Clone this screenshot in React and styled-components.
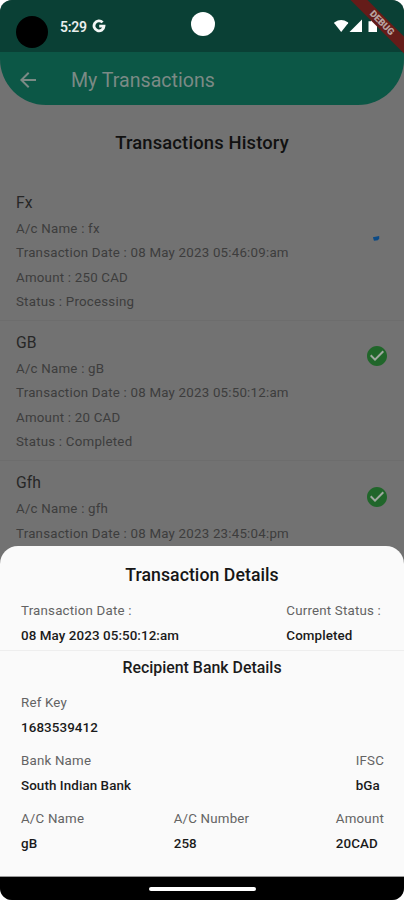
import React from "react";
import styled, { createGlobalStyle } from "styled-components";
import { MdArrowBack, MdCheckCircle } from "react-icons/md";

const transactions = [
  {
    title: "Fx",
    name: "fx",
    date: "08 May 2023 05:46:09:am",
    amount: "250 CAD",
    status: "Processing",
  },
  {
    title: "GB",
    name: "gB",
    date: "08 May 2023 05:50:12:am",
    amount: "20 CAD",
    status: "Completed",
  },
  {
    title: "Gfh",
    name: "gfh",
    date: "08 May 2023 23:45:04:pm",
    status: "Completed",
  },
];

const App = () => {
  return (
    <>
      <GlobalStyle />
      <Phone>
        <StatusBar>
          <Bubble />
          <Clock>5:29</Clock>
          <GoogleIcon />
          <Camera />
          <SignalIcons />
        </StatusBar>
        <Header>
          <MdArrowBack size={24} />
          <HeaderTitle>My Transactions</HeaderTitle>
        </Header>
        <History>
          <HistoryTitle>Transactions History</HistoryTitle>
          {transactions.map((item) => (
            <TransactionItem key={item.title} {...item} />
          ))}
        </History>
        <DetailSheet />
        <NavBar>
          <NavHandle />
        </NavBar>
        <DebugBanner>DEBUG</DebugBanner>
      </Phone>
    </>
  );
};

const TransactionItem = ({ title, name, date, amount, status }) => {
  return (
    <Item>
      <div>
        <ItemTitle>{title}</ItemTitle>
        <ItemLine>A/c Name : {name}</ItemLine>
        <ItemLine>Transaction Date : {date}</ItemLine>
        {amount && (
          <>
            <ItemLine>Amount : {amount}</ItemLine>
            <ItemLine>Status : {status}</ItemLine>
          </>
        )}
      </div>
      <ItemIcon>
        {status === "Completed" ? <CheckIcon /> : <SpinnerIcon />}
      </ItemIcon>
    </Item>
  );
};

const DetailSheet = () => {
  return (
    <Sheet>
      <SheetTitle>Transaction Details</SheetTitle>
      <SheetRow>
        <Detail label="Transaction Date :" value="08 May 2023 05:50:12:am" />
        <Detail label="Current Status :" value="Completed" inset={3} />
      </SheetRow>
      <Divider />
      <SheetSubtitle>Recipient Bank Details</SheetSubtitle>
      <SheetRow>
        <Detail label="Ref Key" value="1683539412" />
      </SheetRow>
      <SheetRow>
        <Detail label="Bank Name" value="South Indian Bank" />
        <Detail label="IFSC" value="bGa" />
      </SheetRow>
      <SheetRow>
        <Detail label="A/C Name" value="gB" />
        <Detail label="A/C Number" value="258" inset={-3} />
        <Detail label="Amount" value="20CAD" />
      </SheetRow>
    </Sheet>
  );
};

const Detail = ({ label, value, inset = 0 }) => (
  <DetailCell $inset={inset}>
    <DetailLabel>{label}</DetailLabel>
    <DetailValue>{value}</DetailValue>
  </DetailCell>
);

const GoogleIcon = () => (
  <svg width="14" height="14" viewBox="0 0 14 14" fill="none">
    <path
      d="M10.6 3.4A5 5 0 1 0 12 7.2H7.2"
      stroke="#f4f7f6"
      strokeWidth="2.8"
    />
  </svg>
);

// wifi, mobile signal and battery
const SignalIcons = () => (
  <SignalSvg width="46" height="14" viewBox="0 0 46 14" fill="#ffffff">
    <path d="M7.2 13 L0.3 4.2 Q0 3.7 0.6 3.2 Q7.2 -1.4 13.8 3.2 Q14.4 3.7 14.1 4.2 Z" />
    <path d="M28 0.4 V13 H15.5 Z" />
    <path d="M34.5 2.2 H37 V0.6 H41 V2.2 H43 V13 H34.5 Z" />
  </SignalSvg>
);

const SpinnerIcon = () => (
  <svg width="24" height="42" viewBox="0 0 24 42">
    <path d="M7.9 33.2 L14.2 32 V34.8 L12.8 36.2 L9 36.8 Z" fill="#0b4a86" />
  </svg>
);

export default App;

const GlobalStyle = createGlobalStyle`
  * {
    box-sizing: border-box;
  }
  body {
    margin: 0;
    background: #ffffff;
    font-family: Roboto, "Liberation Sans", sans-serif;
  }
`;

const Phone = styled.div`
  position: relative;
  display: flex;
  flex-direction: column;
  width: 404px;
  height: 900px;
  overflow: hidden;
  background: #727272;
  border-radius: 12px;
`;

const StatusBar = styled.div`
  position: relative;
  display: flex;
  flex: none;
  align-items: center;
  height: 52px;
  padding: 0 24px 0 16px;
  background: #0a4035;
`;

const Bubble = styled.div`
  width: 32px;
  height: 32px;
  margin-top: 11px;
  background: #000000;
  border-radius: 50%;
`;

const Clock = styled.div`
  width: 27px;
  margin: 1px 5px 0 12px;
  color: #e8eeec;
  font-size: 14px;
  font-weight: 600;
  letter-spacing: -0.3px;
`;

const Camera = styled.div`
  position: absolute;
  top: 12px;
  left: 191px;
  width: 24px;
  height: 24px;
  background: #ffffff;
  border-radius: 50%;
`;

const SignalSvg = styled.svg`
  margin-left: auto;
`;

const Header = styled.div`
  display: flex;
  flex: none;
  align-items: center;
  height: 53px;
  padding: 2px 16px 0;
  color: #7b8a85;
  background: #0c5746;
  border-radius: 0 0 46px 46px;
`;

const HeaderTitle = styled.div`
  margin: 1px 0 0 31px;
  font-size: 19.6px;
`;

const History = styled.div`
  flex: none;
  height: 441px;
  overflow: hidden;
`;

const HistoryTitle = styled.div`
  height: 75.6px;
  padding-top: 26px;
  color: #111111;
  font-size: 18.4px;
  font-weight: 500;
  line-height: 24px;
  letter-spacing: 0.15px;
  text-align: center;
`;

const Item = styled.div`
  display: flex;
  justify-content: space-between;
  height: 140.3px;
  padding: 12px 15px 0 16px;
  border-bottom: 1px solid #6d6d6d;
`;

const ItemTitle = styled.div`
  margin-bottom: 4px;
  color: #272727;
  font-size: 15.7px;
  line-height: 20px;
`;

const ItemLine = styled.div`
  color: #3d3d3d;
  font-size: 13.3px;
  line-height: 24.5px;
  letter-spacing: 0.22px;
`;

const ItemIcon = styled.div`
  padding-top: 11.5px;
`;

const CheckIcon = styled(MdCheckCircle)`
  width: 24px;
  height: 24px;
  color: #20662a;
  background: radial-gradient(#a0a8a0 8px, transparent 8.5px);
`;

const Sheet = styled.div`
  position: relative;
  display: flex;
  flex: 1;
  flex-direction: column;
  padding-top: 17px;
  background: #fafafa;
  border-bottom: 1px solid #9a9a9a;
  border-radius: 18px 18px 0 0;
`;

const SheetTitle = styled.div`
  margin-bottom: 12px;
  color: #161616;
  font-size: 17.7px;
  font-weight: 500;
  line-height: 24px;
  letter-spacing: 0.05px;
  text-align: center;
`;

const SheetRow = styled.div`
  display: flex;
  justify-content: space-between;
  height: 58px;
  padding: 0 20px 0 21px;
`;

const DetailCell = styled.div`
  margin-right: ${(props) => props.$inset}px;
`;

const DetailLabel = styled.div`
  color: #636363;
  font-size: 13.3px;
  line-height: 24.5px;
  letter-spacing: 0.2px;
`;

const DetailValue = styled.div`
  color: #1a1a1a;
  font-size: 13.4px;
  font-weight: 500;
  line-height: 24.5px;
  letter-spacing: 0.08px;
`;

const Divider = styled.div`
  height: 1px;
  margin-top: -7px;
  background: #eeeeee;
`;

const SheetSubtitle = styled.div`
  margin: 5px 0 11px;
  color: #1c1c1c;
  font-size: 15.9px;
  font-weight: 500;
  line-height: 24px;
  text-align: center;
`;

const NavBar = styled.div`
  display: flex;
  flex: none;
  align-items: center;
  justify-content: center;
  height: 23px;
  background: #000000;
`;

const NavHandle = styled.div`
  width: 107px;
  height: 4px;
  background: #ffffff;
  border-radius: 2px;
`;

const DebugBanner = styled.div`
  position: absolute;
  top: 17px;
  right: -28px;
  width: 100px;
  height: 12px;
  color: #b9a3a1;
  background: #651c19;
  font-size: 9.5px;
  font-weight: 900;
  line-height: 12px;
  text-align: center;
  transform: rotate(45deg);
`;
